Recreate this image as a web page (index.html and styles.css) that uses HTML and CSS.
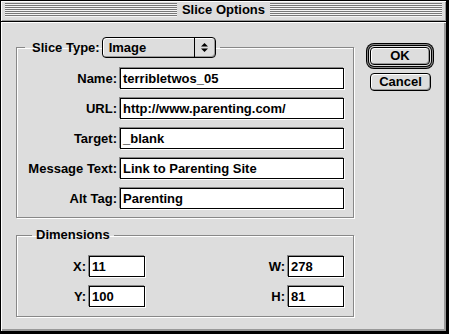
FILE: index.html
```html
<!DOCTYPE html>
<html lang="en">
<head>
    <meta charset="UTF-8">
    <title>Slice Options</title>
    <link rel="stylesheet" href="styles.css">
</head>
<body>
    <div class="window">
        <div class="titlebar">
            <div class="stripes"><span class="title">Slice Options</span></div>
        </div>
        <div class="content">
            <div class="groups">
                <fieldset class="group group-slice">
                    <legend class="legend legend-slice">
                        <span class="legend-label">Slice Type:</span>
                        <span class="popup">
                            <span class="popup-value">Image</span>
                            <span class="popup-arrows">
                                <svg width="7" height="11" viewBox="0 0 7 11">
                                    <polygon points="0,4.5 3.5,1 7,4.5" fill="#000"/>
                                    <polygon points="0,6.5 3.5,10 7,6.5" fill="#000"/>
                                </svg>
                            </span>
                        </span>
                    </legend>
                    <div class="fields">
                        <span class="field-label">Name:</span>
                        <div class="field">terribletwos_05</div>
                        <span class="field-label">URL:</span>
                        <div class="field">http://www.parenting.com/</div>
                        <span class="field-label">Target:</span>
                        <div class="field">_blank</div>
                        <span class="field-label">Message Text:</span>
                        <div class="field">Link to Parenting Site</div>
                        <span class="field-label">Alt Tag:</span>
                        <div class="field">Parenting</div>
                    </div>
                </fieldset>

                <fieldset class="group group-dim">
                    <legend class="legend legend-dim">Dimensions</legend>
                    <div class="dims">
                        <div class="dim-col">
                            <span class="field-label">X:</span>
                            <div class="field">11</div>
                            <span class="field-label">Y:</span>
                            <div class="field">100</div>
                        </div>
                        <div class="dim-col">
                            <span class="field-label">W:</span>
                            <div class="field">278</div>
                            <span class="field-label">H:</span>
                            <div class="field">81</div>
                        </div>
                    </div>
                </fieldset>
            </div>

            <div class="buttons">
                <button class="btn btn-default">OK</button>
                <button class="btn">Cancel</button>
            </div>
        </div>
    </div>
</body>
</html>
```

FILE: styles.css
```css
body {
    margin: 0;
    padding: 0;
    background: #dddddd;
    font-family: "Liberation Sans", Arial, sans-serif;
    font-weight: bold;
    font-size: 13px;
    color: #000;
}
.window {
    width: 449px;
    height: 334px;
    box-sizing: border-box;
    border: 1px solid #000;
    border-right-width: 3px;
    border-bottom-width: 3px;
    background: #dddddd;
    display: flex;
    flex-direction: column;
}
.titlebar {
    height: 21px;
    box-sizing: border-box;
    border-bottom: 1px solid #000;
    background: #dddddd;
    box-shadow: inset 1px 1px 0 #fff, inset -1px -1px 0 #999;
    padding: 2px 4px 0 4px;
}
.stripes {
    height: 14px;
    background: repeating-linear-gradient(to bottom, #777 0, #777 1px, #f4f4f4 1px, #f4f4f4 2px);
    display: flex;
    justify-content: center;
    align-items: center;
}
.title {
    background: #dddddd;
    padding: 0 5px;
    line-height: 16px;
    font-size: 13px;
}
.content {
    flex: 1;
    display: flex;
    padding: 15px 0 0 15px;
    box-shadow: inset 1px 1px 0 #fff, inset -2px -2px 0 #999;
}
.groups {
    width: 338px;
}
.group {
    margin: 0;
    border: 1px solid #888;
    box-shadow: inset 1px 1px 0 #fff, 1px 1px 0 #fff;
    min-width: 0;
}
.group-slice {
    padding: 10px 9px 8px 0;
}
.group-dim {
    margin-top: 10px;
    padding: 14px 9px 9px 0;
}
.legend {
    padding: 0 4px;
    line-height: 14px;
}
.legend-slice {
    margin-left: 8px;
    display: flex;
    align-items: center;
}
.legend-label {
    padding-left: 3px;
    margin-right: 2px;
}
.legend-dim {
    margin-left: 15px;
}
.popup {
    width: 114px;
    height: 21px;
    box-sizing: border-box;
    border: 1px solid #000;
    border-radius: 4px;
    background: #dddddd;
    box-shadow: inset 1px 1px 0 #fff, inset -1px -1px 0 #999;
    display: flex;
    align-items: stretch;
}
.popup-value {
    flex: 1;
    padding-left: 6px;
    line-height: 19px;
}
.popup-arrows {
    width: 20px;
    border-left: 1px solid #000;
    display: flex;
    align-items: center;
    justify-content: center;
}
.fields {
    display: grid;
    grid-template-columns: 1fr 224px;
    column-gap: 3px;
    row-gap: 9px;
    align-items: center;
}
.field-label {
    text-align: right;
}
.field {
    height: 21px;
    box-sizing: border-box;
    border: 1px solid #000;
    background: #fff;
    box-shadow: -1px -1px 0 #888, 1px 1px 0 #fff;
    padding-left: 2px;
    line-height: 19px;
    white-space: nowrap;
    overflow: hidden;
}
.dims {
    display: flex;
    justify-content: space-between;
    padding-left: 39px;
}
.dim-col {
    display: grid;
    grid-template-columns: 30px 56px;
    column-gap: 3px;
    row-gap: 9px;
    align-items: center;
}
.buttons {
    margin: 10px 0 0 16px;
    display: flex;
    flex-direction: column;
    gap: 8px;
    align-items: flex-start;
}
.btn {
    width: 61px;
    height: 18px;
    padding: 0;
    border: 1px solid #000;
    border-radius: 4px;
    background: #dddddd;
    box-shadow: inset 1px 1px 0 #fff, inset -1px -1px 0 #999;
    font: inherit;
    line-height: 16px;
    color: #000;
}
.btn-default {
    width: 60px;
    box-shadow: inset 1px 1px 0 #fff, inset -1px -1px 0 #999,
        0 0 0 1px #dddddd, 0 0 0 2px #000, 0 0 0 3px #888, 0 0 0 4px #000;
}
```
